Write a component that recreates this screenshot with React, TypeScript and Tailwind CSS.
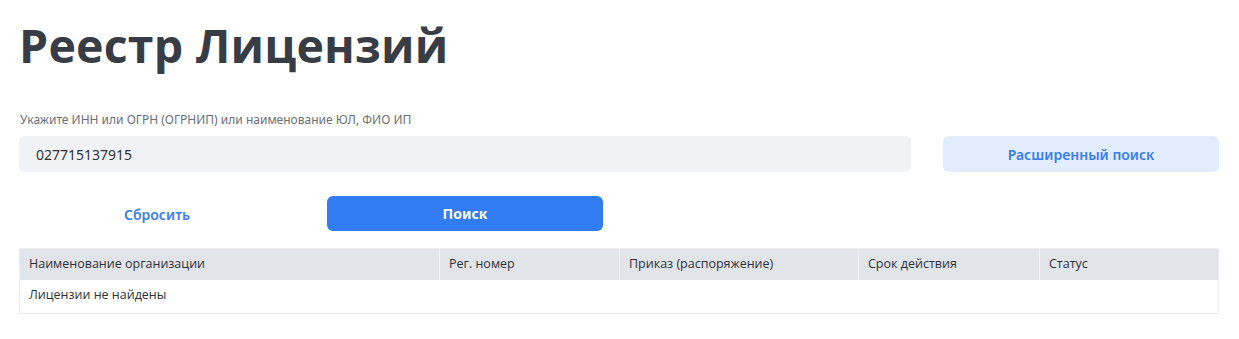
const COLUMNS = [
  { title: 'Наименование организации', width: 'w-[420px]' },
  { title: 'Рег. номер', width: 'w-[180px]' },
  { title: 'Приказ (распоряжение)', width: 'w-[239px]' },
  { title: 'Срок действия', width: 'w-[181px]' },
  { title: 'Статус', width: '' },
];

export default function App() {
  return (
    <div className="min-h-screen bg-white pl-[19px] pr-[20px] font-['Noto_Sans',sans-serif]">
      {/* Page title */}
      <h1 className="pt-[13px] text-[46.5px] font-bold leading-[64px] tracking-[0.2px] text-[#383d45] font-['Open_Sans',sans-serif]">
        Реестр Лицензий
      </h1>

      {/* Search form */}
      <div className="mt-[35px]">
        <label className="block pl-px text-[12px] leading-[16px] text-[#6b6f76]">
          Укажите ИНН или ОГРН (ОГРНИП) или наименование ЮЛ, ФИО ИП
        </label>
        <div className="mt-[8px] grid grid-cols-4 gap-8">
          <input
            className="col-span-3 h-9 rounded-md bg-[#f1f2f6] px-[17px] text-[14px] text-[#2e3238] outline-none"
            defaultValue="027715137915"
          />
          <button className="h-9 rounded-md bg-[#e1edfd] text-[14px] font-semibold text-[#3b7de9]">
            Расширенный поиск
          </button>
        </div>
        <div className="mt-[24px] grid grid-cols-4 gap-8">
          <button className="h-9 text-[14px] font-semibold text-[#3b7de9]">Сбросить</button>
          <button className="h-[35px] rounded-md bg-[#317cf0] text-[14px] font-bold text-white">
            Поиск
          </button>
        </div>
      </div>

      {/* Results table */}
      <table className="mt-[16px] w-full border-collapse border border-[#ececec] text-[12.5px] text-[#2e3238] font-['Open_Sans',sans-serif]">
        <thead>
          <tr className="bg-[#e1e4e9]">
            {COLUMNS.map((c) => (
              <th
                key={c.title}
                className={`h-[31px] border-r border-[#f3f4f6] px-[9px] text-left font-normal last:border-r-0 ${c.width}`}
              >
                {c.title}
              </th>
            ))}
          </tr>
        </thead>
        <tbody>
          <tr>
            <td colSpan={5} className="h-[34px] px-[9px] pb-px">
              Лицензии не найдены
            </td>
          </tr>
        </tbody>
      </table>
    </div>
  );
}
